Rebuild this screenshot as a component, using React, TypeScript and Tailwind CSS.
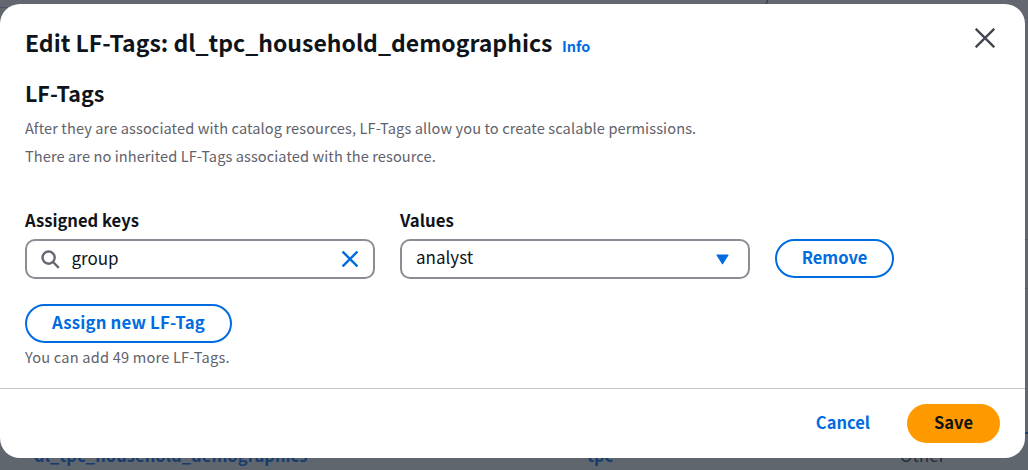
function CloseIcon({ className }: { className: string }) {
  return (
    <svg viewBox="0 0 20 20" fill="none" stroke="currentColor" className={className}>
      <path d="M0.7 0.7 19.3 19.3M19.3 0.7 0.7 19.3" />
    </svg>
  );
}

function Backdrop() {
  return (
    <div className="absolute inset-0 bg-[#636770]">
      <div className="absolute left-0 top-[7px] h-px w-6 bg-[#4c515d]" />
      <svg viewBox="0 0 6 5" className="absolute left-[764px] top-0 h-[5px] w-1.5">
        <path d="M3.7 0 2 5" stroke="#353a47" strokeWidth="1.3" fill="none" />
      </svg>
      <div className="absolute right-0 top-[239px] h-px w-1 bg-[#555a65]" />
      <div className="absolute right-0 top-[288px] h-px w-1 bg-[#555a65]" />
      <div className="absolute inset-x-0 bottom-0 h-9 bg-[#5f666e]" />
      <div className="absolute right-0 top-[432px] h-0.5 w-2 bg-[#1d416f]" />
      <span className="absolute left-[34px] top-[445px] text-[16.5px] font-bold leading-5 tracking-[0.06px] text-[#173c6d]">
        dl_tpc_household_demographics
      </span>
      <span className="absolute left-[587px] top-[445px] text-[16.5px] font-bold leading-5 text-[#173c6d]">tpc</span>
      <span className="absolute left-[900px] top-[445px] text-[16.5px] leading-5 tracking-[0.3px] text-[#252c38]">Other</span>
    </div>
  );
}

export default function App() {
  return (
    <div className="relative h-[470px] w-[1028px] overflow-hidden font-['Noto_Sans_CJK_SC',sans-serif] text-[#0f141a]">
      <Backdrop />
      <div role="dialog" className="relative mt-1 flex h-[454px] w-[1025px] flex-col overflow-hidden rounded-[20px] bg-white">
        <header className="flex items-start justify-between pl-[25px] pr-[30px] pt-[22px]">
          <h1 className="flex items-baseline gap-[9.5px] text-[23px] font-bold leading-8">
            <span>Edit LF-Tags: dl_tpc_household_demographics</span>
            <a className="text-[14.5px] text-[#006ce0]">Info</a>
          </h1>
          <button aria-label="Close" className="pt-0.5 text-[#424650]">
            <CloseIcon className="h-5 w-5 stroke-[2.3]" />
          </button>
        </header>

        <main className="flex flex-1 flex-col px-[25px] pt-[15px]">
          <h2 className="text-[21.4px] font-bold leading-8">LF-Tags</h2>
          <p className="mt-1.5 text-[14.6px] leading-[25px] tracking-[0.1px] text-[#5f626b]">
            After they are associated with catalog resources, LF-Tags allow you to create scalable permissions.
          </p>
          <p className="mt-[3px] text-[14.6px] leading-[25px] tracking-[0.08px] text-[#5f626b]">
            There are no inherited LF-Tags associated with the resource.
          </p>

          <div className="mt-10 flex items-end gap-[25px]">
            <label className="flex w-[350px] flex-col gap-1.5">
              <span className="text-[16.6px] font-bold leading-[25px]">Assigned keys</span>
              <span className="flex h-10 items-center rounded-[10px] border-2 border-[#8c8c94] pl-3.5 pr-[15px]">
                <svg viewBox="0 0 19 19" fill="none" stroke="#656871" className="h-[19px] w-[19px] stroke-[2.4]">
                  <circle cx="7.6" cy="7.6" r="6.1" />
                  <path d="M12 12 17.8 17.8" />
                </svg>
                <span className="ml-[11.5px] flex-1 pb-0.5 text-[17px] leading-6">group</span>
                <CloseIcon className="h-4 w-4 stroke-[3] text-[#006ce0]" />
              </span>
            </label>
            <label className="flex w-[350px] flex-col gap-1.5">
              <span className="text-[16.8px] font-bold leading-[25px]">Values</span>
              <span className="flex h-10 items-center justify-between rounded-[10px] border-2 border-[#8c8c94] pb-0.5 pl-3.5 pr-[19px]">
                <span className="pb-0.5 text-[17px] leading-6">analyst</span>
                <svg viewBox="0 0 13 11" fill="#006ce0" stroke="#006ce0" strokeLinejoin="round" className="mt-[3px] h-[11px] w-[13px]">
                  <path d="M1 1h11L6.5 9.7Z" strokeWidth="1.2" />
                </svg>
              </span>
            </label>
            <button className="mb-px h-[39px] w-[119px] rounded-full border-2 border-[#006ce0] pb-0.5 text-[16.5px] font-bold text-[#006ce0]">
              Remove
            </button>
          </div>

          <button className="mt-[25px] h-[39px] w-[207px] rounded-full border-2 border-[#006ce0] pb-0.5 text-[16.8px] font-bold tracking-[0.18px] text-[#006ce0]">
            Assign new LF-Tag
          </button>
          <p className="mt-px text-[14.6px] leading-[25px] tracking-[0.2px] text-[#5f626b]">You can add 49 more LF-Tags.</p>
        </main>

        <footer className="flex h-[70px] shrink-0 items-center justify-end gap-[37px] border-t border-[#c6c6cd] pr-[25px] text-[16.5px] font-bold">
          <button className="pb-0.5 text-[#006ce0]">Cancel</button>
          <button className="h-[39px] w-[93px] rounded-full bg-[#ff9900] pb-0.5">Save</button>
        </footer>
      </div>
    </div>
  );
}
